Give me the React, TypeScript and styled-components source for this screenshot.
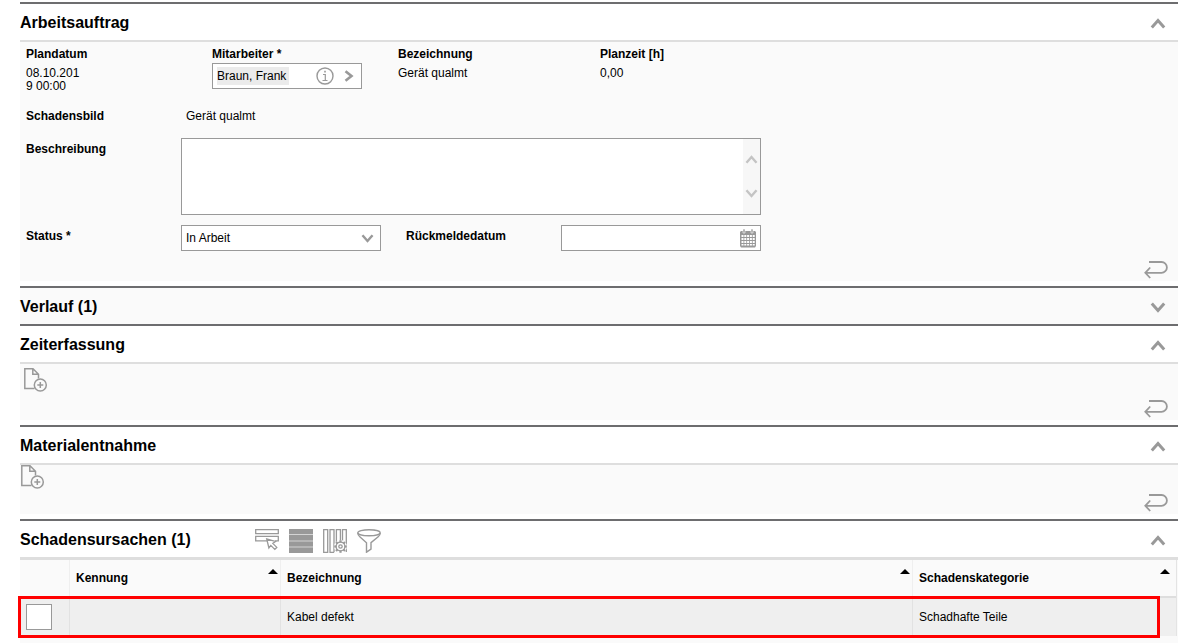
import React, { useState } from "react";
import styled, { createGlobalStyle } from "styled-components";

const GlobalStyle = createGlobalStyle`
  * { box-sizing: border-box; }
  body {
    margin: 0;
    background: #fff;
    color: #000;
    font: 12px/13px "Liberation Sans", Arial, sans-serif;
  }
  button, input, select, textarea { font: inherit; color: inherit; border-radius: 0; }
`;

const Page = styled.main`
  padding: 2px 3px 0 20px;
`;

const Section = styled.section<{ $last?: boolean; $closed?: boolean }>`
  border-top: 2px solid #6d6d6f;
  padding-bottom: ${(p) => (p.$last || p.$closed ? 0 : 5)}px;
`;

const SectionHeader = styled.header<{ $closed?: boolean }>`
  display: flex;
  align-items: center;
  height: 36px;
  padding-right: 8px;
  background: ${(p) => (p.$closed ? "#fafafa" : "#fff")};
`;

const Title = styled.h2<{ $wide?: boolean }>`
  margin: 0;
  min-width: ${(p) => (p.$wide ? 235 : 0)}px;
  padding-top: 1px;
  font-size: 16px;
  line-height: 18px;
  font-weight: bold;
`;

const Toolbar = styled.div`
  display: flex;
  gap: 10px;
  padding-top: 4px;
`;

const IconButton = styled.button`
  display: flex;
  align-items: center;
  justify-content: center;
  min-width: 0;
  padding: 0;
  border: 0;
  background: none;
  color: #999;
  cursor: pointer;
`;

const ToggleButton = styled(IconButton)`
  width: 24px;
  margin-left: auto;
  padding-top: 2px;
`;

const Body = styled.div<{ $height: number; $top?: number; $left?: number }>`
  display: flex;
  flex-direction: column;
  justify-content: space-between;
  min-height: ${(p) => p.$height}px;
  border-top: 2px solid #dedede;
  padding: ${(p) => p.$top ?? 0}px 10px 2px ${(p) => p.$left ?? 0}px;
  background: #fafafa;
`;

const BodyFooter = styled.div`
  display: flex;
  justify-content: flex-end;
`;

const BodyActions = styled.div`
  display: flex;
`;

const Form = styled.div`
  padding: 6px 0 0 6px;
`;

const Overview = styled.div`
  display: grid;
  grid-template-columns: 186px 186px 202px 1fr;
  min-height: 62px;
`;

const Label = styled.label`
  display: block;
  font-weight: bold;
`;

const Value = styled.div<{ $narrow?: boolean }>`
  width: ${(p) => (p.$narrow ? "56px" : "auto")};
  padding-top: 6px;
  word-break: ${(p) => (p.$narrow ? "break-all" : "normal")};
`;

const Fields = styled.div`
  display: grid;
  grid-template-columns: 155px 225px 155px 200px;
  row-gap: 10px;
`;

const FieldLabel = styled(Label)`
  padding-top: 5px;
`;

const FieldValue = styled.output`
  grid-column: 2 / -1;
  padding: 0 5px;
  min-height: 18px;
`;

const Box = styled.div<{ $width: string; $height?: number; $span?: number }>`
  display: flex;
  grid-column: span ${(p) => p.$span ?? 1};
  align-items: center;
  width: ${(p) => p.$width};
  height: ${(p) => p.$height ?? 26}px;
  border: 1px solid #999;
  background: #fff;
`;

const LookupBox = styled(Box)`
  margin-top: 2px;
  padding: 0 7px 0 4px;
  gap: 10px;
`;

const LookupInput = styled.input`
  width: 72px;
  height: 18px;
  margin-right: auto;
  padding: 0;
  border: 0;
  background: #ebebeb;
`;

const TextArea = styled.textarea`
  flex: 1;
  align-self: stretch;
  min-width: 0;
  padding: 4px;
  border: 0;
  resize: none;
  overflow: hidden;
  background: transparent;
`;

const Scroller = styled.div`
  display: flex;
  flex-direction: column;
  align-items: center;
  justify-content: space-between;
  align-self: stretch;
  width: 17px;
  padding: 16px 0;
  background: #f7f7f7;
`;

const ScrollButton = styled(IconButton)`
  color: #c4c4c4;
`;

const SelectBox = styled(Box)`
  position: relative;
`;

const Select = styled.select`
  flex: 1;
  align-self: stretch;
  appearance: none;
  padding: 0 24px 0 4px;
  border: 0;
  background: transparent;
`;

const SelectArrow = styled.span`
  position: absolute;
  right: 6px;
  top: 8px;
  display: flex;
  color: #999;
  pointer-events: none;
`;

const DateInput = styled.input`
  flex: 1;
  min-width: 0;
  height: 24px;
  padding: 0 4px;
  border: 0;
  background: transparent;
`;

const DateButton = styled(IconButton)`
  margin-right: 4px;
`;

const TableArea = styled.div`
  position: relative;
  border-top: 3px solid #dedede;
  padding: 0 1px 12px 0;
  background: #fafafa;
`;

const Table = styled.table`
  width: 100%;
  table-layout: fixed;
  border-collapse: separate;
  border-spacing: 0;
  border-right: 1px solid #e4e4e4;
`;

const Col = styled.col<{ $width?: number }>`
  width: ${(p) => (p.$width ? `${p.$width}px` : "auto")};
`;

const HeadCell = styled.th<{ $last?: boolean }>`
  height: 38px;
  padding: 0 ${(p) => (p.$last ? 6 : 2)}px 0 6px;
  border-bottom: 2px solid #dedede;
  text-align: left;
  & + & { border-left: 1px solid #efefef; }
`;

const HeadContent = styled.div`
  display: flex;
  justify-content: space-between;
  align-items: center;
`;

const SortButton = styled(IconButton)`
  padding-bottom: 13px;
  color: #000;
`;

const Cell = styled.td`
  height: 38px;
  padding: 0 6px;
  background: #efefef;
  & + & { border-left: 1px solid #e2e2e2; }
`;

const Checkbox = styled.input`
  display: block;
  appearance: none;
  width: 26px;
  height: 26px;
  margin: 0;
  border: 1px solid #999;
  background: #fff;
  &:checked { background: #999; }
`;

const Highlight = styled.div`
  position: absolute;
  top: 36px;
  left: -2px;
  right: 18px;
  height: 42px;
  border: 3px solid #f00;
  pointer-events: none;
`;

function Chevron({ dir, width = 16 }: { dir: "up" | "down"; width?: number }) {
  return (
    <svg width={width} height={width === 16 ? 11 : 9} viewBox="0 0 16 11" fill="none" stroke="currentColor" strokeWidth="3">
      <path d={dir === "up" ? "M1.800 9.500 L8 2.500 L14.200 9.500" : "M1.800 1.500 L8 8.500 L14.200 1.500"} />
    </svg>
  );
}

const InfoIcon = () => (
  <svg width="18" height="18" viewBox="0 0 18 18" fill="none" stroke="currentColor">
    <circle cx="9" cy="9" r="8" strokeWidth="1.4" />
    <path d="M7 7.5h2.3v6M6.5 13.5h5" strokeWidth="1.2" />
    <path d="M8.2 4.6h1.6" strokeWidth="1.6" />
  </svg>
);

const NextIcon = () => (
  <svg width="10" height="12" viewBox="0 0 10 12" fill="none" stroke="currentColor" strokeWidth="2.6">
    <path d="M1.5 1.2 L7.5 6 L1.5 10.8" />
  </svg>
);

const CalendarIcon = () => (
  <svg width="16" height="19" viewBox="0 0 16 19">
    <path d="M1 2h14l1 1v14l-1 1.500H1L0 17V3z" fill="#999" />
    <path d="M3 0h2v4H3zM11 0h2v4h-2z" fill="#999" stroke="#fff" strokeWidth=".6" />
    <path
      d="M1.500 6h2v2h-2zM4.300 6h2v2h-2zM7.100 6h2v2h-2zM9.900 6h2v2h-2zM12.700 6h2v2h-2zM1.500 9h2v2h-2zM4.300 9h2v2h-2zM7.100 9h2v2h-2zM9.900 9h2v2h-2zM12.700 9h2v2h-2zM1.500 12h2v2h-2zM4.300 12h2v2h-2zM7.100 12h2v2h-2zM9.900 12h2v2h-2zM12.700 12h2v2h-2zM1.500 15h2v1.500h-2zM4.300 15h2v1.500h-2zM7.100 15h2v1.500h-2zM9.900 15h2v1.500h-2zM12.700 15h2v1.500h-2z"
      fill="#fff"
    />
  </svg>
);

const ReturnIcon = () => (
  <svg width="24" height="18" viewBox="0 0 24 18" fill="none" stroke="currentColor" strokeWidth="1.800">
    <path d="M5 1H17.500a5.300 5.300 0 0 1 0 10.800H1.500M6.200 6.500 L1.300 11.800 L6.200 17" />
  </svg>
);

const NewDocIcon = () => (
  <svg width="24" height="24" viewBox="0 0 24 24" fill="none" stroke="currentColor" strokeWidth="1.5">
    <path d="M10.500 20.500H.8V.8H9L14.500 6.300V10.500M8.800.8V6.300H14.500" />
    <circle cx="16.300" cy="17" r="6" />
    <path d="M13.300 17h6M16.300 14v6" />
  </svg>
);

const SelectRowIcon = () => (
  <svg width="24" height="24" viewBox="0 0 24 24" fill="none" stroke="currentColor" strokeWidth="1.300">
    <path d="M.7.7h22.600v4H.7z" />
    <path d="M12 11.800H.7V7.300h22.600v4.500H20" />
    <path d="M11.700 10l8.800 2.400-2.700 2 4 4-2 2-4-4-1.900 2.600z" fill="#fff" />
  </svg>
);

const RowsIcon = () => (
  <svg width="24" height="24" viewBox="0 0 24 24">
    <path d="M0 0h24v24H0z" fill="#999" />
    <path d="M0 5.500h24M0 12h24M0 18h24" stroke="#d4d4d4" strokeWidth="1.200" />
  </svg>
);

const gearTeeth = [0, 45, 90, 135, 180, 225, 270, 315];

const ColumnsIcon = () => (
  <svg width="24" height="24" viewBox="0 0 24 24" fill="none" stroke="currentColor" strokeWidth="1.300">
    <path d="M.7.7h4v22.600h-4zM11 23.300H7V.7h4V23.300M13.400 13V.7h4V12M19.500 12V.7h3.800V23" />
    <circle cx="17.500" cy="17.500" r="6.500" fill="#fff" stroke="none" />
    {gearTeeth.map((a) => (
      <path key={a} d="M17.500 13.500v-2.300" strokeWidth="2.200" transform={`rotate(${a} 17.500 17.500)`} />
    ))}
    <circle cx="17.500" cy="17.500" r="4.400" />
    <circle cx="17.500" cy="17.500" r="1.700" />
  </svg>
);

const FilterIcon = () => (
  <svg width="24" height="24" viewBox="0 0 24 24" fill="none" stroke="currentColor" strokeWidth="1.400">
    <ellipse cx="12" cy="3.700" rx="11.200" ry="3" />
    <path d="M.8 4c0 2 .8 2.700 2 3.700l6.700 6v9.500l4.500-3v-6.500l7.200-6c1.200-1 2-1.700 2-3.700" />
  </svg>
);

const SortIcon = () => (
  <svg width="10" height="5" viewBox="0 0 10 5" fill="currentColor">
    <path d="M5 0 L10 5 H0z" />
  </svg>
);

type HeaderProps = {
  title: string;
  open: boolean;
  onToggle: () => void;
  tools?: React.ReactNode;
};

function Header({ title, open, onToggle, tools }: HeaderProps) {
  return (
    <SectionHeader $closed={!open}>
      <Title $wide={!!tools}>{title}</Title>
      {tools && <Toolbar>{tools}</Toolbar>}
      <ToggleButton type="button" aria-expanded={open} aria-label={title} onClick={onToggle}>
        <Chevron dir={open ? "up" : "down"} />
      </ToggleButton>
    </SectionHeader>
  );
}

type PanelProps = {
  title: string;
  defaultOpen?: boolean;
  height?: number;
  top?: number;
  left?: number;
  children?: React.ReactNode;
};

function Panel({ title, defaultOpen = true, height = 0, top, left, children }: PanelProps) {
  const [open, setOpen] = useState(defaultOpen);
  return (
    <Section $closed={!open}>
      <Header title={title} open={open} onToggle={() => setOpen(!open)} />
      {open && (
        <Body $height={height} $top={top} $left={left}>
          {children}
          <BodyFooter>
            <IconButton type="button" aria-label="Zurück">
              <ReturnIcon />
            </IconButton>
          </BodyFooter>
        </Body>
      )}
    </Section>
  );
}

function OrderForm() {
  return (
    <Form>
      <Overview>
        <div>
          <Label as="div">Plandatum</Label>
          <Value $narrow>08.10.2019 00:00</Value>
        </div>
        <div>
          <Label htmlFor="employee">Mitarbeiter *</Label>
          <LookupBox $width="150px">
            <LookupInput id="employee" defaultValue="Braun, Frank" />
            <IconButton type="button" aria-label="Info">
              <InfoIcon />
            </IconButton>
            <IconButton type="button" aria-label="Auswählen">
              <NextIcon />
            </IconButton>
          </LookupBox>
        </div>
        <div>
          <Label as="div">Bezeichnung</Label>
          <Value>Gerät qualmt</Value>
        </div>
        <div>
          <Label as="div">Planzeit [h]</Label>
          <Value>0,00</Value>
        </div>
      </Overview>
      <Fields>
        <Label htmlFor="damage">Schadensbild</Label>
        <FieldValue id="damage">Gerät qualmt</FieldValue>
        <FieldLabel htmlFor="description">Beschreibung</FieldLabel>
        <Box $width="100%" $height={77} $span={3}>
          <TextArea id="description" />
          <Scroller>
            <ScrollButton type="button" aria-label="Nach oben">
              <Chevron dir="up" width={13} />
            </ScrollButton>
            <ScrollButton type="button" aria-label="Nach unten">
              <Chevron dir="down" width={13} />
            </ScrollButton>
          </Scroller>
        </Box>
        <FieldLabel htmlFor="status">Status *</FieldLabel>
        <SelectBox $width="200px">
          <Select id="status" defaultValue="In Arbeit">
            <option>In Arbeit</option>
          </Select>
          <SelectArrow>
            <Chevron dir="down" width={13} />
          </SelectArrow>
        </SelectBox>
        <FieldLabel htmlFor="feedback">Rückmeldedatum</FieldLabel>
        <Box $width="200px">
          <DateInput id="feedback" type="text" />
          <DateButton type="button" aria-label="Kalender">
            <CalendarIcon />
          </DateButton>
        </Box>
      </Fields>
    </Form>
  );
}

const columns = ["Kennung", "Bezeichnung", "Schadenskategorie"];
const causes = [{ id: "", name: "Kabel defekt", category: "Schadhafte Teile" }];

function Causes() {
  const [open, setOpen] = useState(true);
  const tools = (
    <>
      <IconButton type="button" aria-label="Zeile wählen"><SelectRowIcon /></IconButton>
      <IconButton type="button" aria-label="Alle Zeilen"><RowsIcon /></IconButton>
      <IconButton type="button" aria-label="Spalten"><ColumnsIcon /></IconButton>
      <IconButton type="button" aria-label="Filter"><FilterIcon /></IconButton>
    </>
  );
  return (
    <Section $last>
      <Header title="Schadensursachen (1)" open={open} onToggle={() => setOpen(!open)} tools={tools} />
      {open && (
        <TableArea>
          <Table>
            <colgroup>
              <Col $width={49} />
              <Col $width={211} />
              <Col />
              <Col $width={264} />
            </colgroup>
            <thead>
              <tr>
                <HeadCell />
                {columns.map((name, i) => (
                  <HeadCell key={name} $last={i === columns.length - 1}>
                    <HeadContent>
                      {name}
                      <SortButton type="button" aria-label={`${name} sortieren`}>
                        <SortIcon />
                      </SortButton>
                    </HeadContent>
                  </HeadCell>
                ))}
              </tr>
            </thead>
            <tbody>
              {causes.map((row) => (
                <tr key={row.name}>
                  <Cell>
                    <Checkbox type="checkbox" aria-label={row.name} />
                  </Cell>
                  <Cell>{row.id}</Cell>
                  <Cell>{row.name}</Cell>
                  <Cell>{row.category}</Cell>
                </tr>
              ))}
            </tbody>
          </Table>
          <Highlight />
        </TableArea>
      )}
    </Section>
  );
}

export default function App() {
  return (
    <>
      <GlobalStyle />
      <Page>
        <Panel title="Arbeitsauftrag" height={241}>
          <OrderForm />
        </Panel>
        <Panel title="Verlauf (1)" defaultOpen={false} />
        <Panel title="Zeiterfassung" height={58} top={4} left={4}>
          <BodyActions>
            <IconButton type="button" aria-label="Neu">
              <NewDocIcon />
            </IconButton>
          </BodyActions>
        </Panel>
        <Panel title="Materialentnahme" height={51} left={1}>
          <BodyActions>
            <IconButton type="button" aria-label="Neu">
              <NewDocIcon />
            </IconButton>
          </BodyActions>
        </Panel>
        <Causes />
      </Page>
    </>
  );
}
